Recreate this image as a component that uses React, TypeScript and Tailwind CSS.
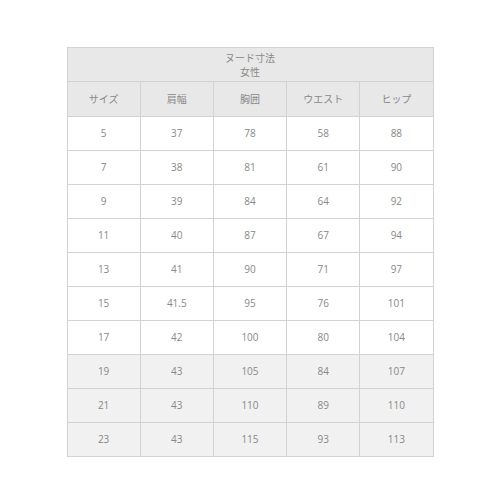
import React from "react";

const rows: [string, string, string, string, string][] = [
  ["5", "37", "78", "58", "88"],
  ["7", "38", "81", "61", "90"],
  ["9", "39", "84", "64", "92"],
  ["11", "40", "87", "67", "94"],
  ["13", "41", "90", "71", "97"],
  ["15", "41.5", "95", "76", "101"],
  ["17", "42", "100", "80", "104"],
  ["19", "43", "105", "84", "107"],
  ["21", "43", "110", "89", "110"],
  ["23", "43", "115", "93", "113"],
];

const heads = ["サイズ", "肩幅", "胸囲", "ウエスト", "ヒップ"];

export default function App() {
  return (
    <div className="w-[500px] h-[500px] bg-white pt-[47px] font-['Open_Sans','Noto_Sans_CJK_JP',sans-serif] text-[10px] text-[#888]">
      <table className="mx-auto w-[367px] table-fixed border-collapse border border-[#d2d2d2]">
        <thead>
          <tr className="h-[34px] bg-[#e8e8e8]">
            <th colSpan={5} className="border border-[#d2d2d2] font-normal leading-[14px]">
              ヌード寸法
              <br />
              女性
            </th>
          </tr>
          <tr className="h-[35px] bg-[#e8e8e8]">
            {heads.map((h) => (
              <th key={h} className="border border-[#d2d2d2] font-normal">
                {h}
              </th>
            ))}
          </tr>
        </thead>
        <tbody>
          {rows.map((r, i) => (
            <tr key={i} className={`h-[34px] ${i >= 7 ? "bg-[#f1f1f1]" : "bg-white"}`}>
              {r.map((c, j) => (
                <td key={j} className="border border-[#d2d2d2] text-center">
                  {c}
                </td>
              ))}
            </tr>
          ))}
        </tbody>
      </table>
    </div>
  );
}
